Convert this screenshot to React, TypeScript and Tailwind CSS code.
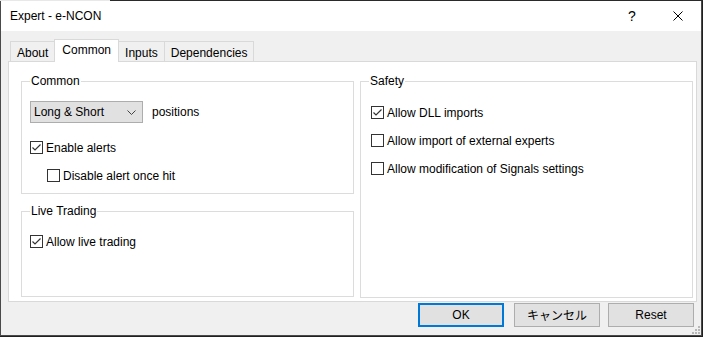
import React from "react";

const font = { fontFamily: '"Liberation Sans", Arial, sans-serif' };

function Check({ checked }: { checked?: boolean }) {
  return (
    <div className="w-[13px] h-[13px] border border-[#333333] bg-white flex items-center justify-center shrink-0">
      {checked && (
        <svg width="11" height="11" viewBox="0 0 11 11">
          <path d="M1.5 5.5 L4 8 L9.5 2.5" fill="none" stroke="#333333" strokeWidth="1.2" />
        </svg>
      )}
    </div>
  );
}

function CheckRow({ label, checked, className = "" }: { label: string; checked?: boolean; className?: string }) {
  return (
    <div className={"flex items-center gap-[3px] h-[13px] " + className}>
      <Check checked={checked} />
      <span className="text-[12px] leading-none text-black whitespace-nowrap">{label}</span>
    </div>
  );
}

function Group({ title, className = "", children }: { title: string; className?: string; children: React.ReactNode }) {
  return (
    <div className={"relative border border-[#dcdcdc] " + className}>
      <span className="absolute left-[8px] -top-[8px] bg-white px-[1px] text-[12px] leading-[14px] text-black">{title}</span>
      {children}
    </div>
  );
}

function Tab({ label, active }: { label: string; active?: boolean }) {
  return active ? (
    <div className="relative z-10 h-[23px] -mb-px bg-white border border-b-0 border-[#d9d9d9] px-[7px] flex items-start pt-[3px] text-[12px] leading-[14px] text-black">
      {label}
    </div>
  ) : (
    <div className="h-[20px] border border-b-0 border-[#d9d9d9] bg-[#f0f0f0] px-[6px] flex items-start pt-[4px] text-[12px] leading-[14px] text-black">
      {label}
    </div>
  );
}

function Btn({ label, primary, cjk, className = "" }: { label: string; primary?: boolean; cjk?: boolean; className?: string }) {
  return (
    <div
      className={
        "w-[86px] h-[24px] flex items-center justify-center bg-[#e1e1e1] text-[12px] text-black " +
        (primary ? "border-2 border-[#0078d7] " : "border border-[#adadad] ") +
        className
      }
      style={cjk ? { fontFamily: '"Noto Sans CJK JP", "Liberation Sans", sans-serif' } : undefined}
    >
      {label}
    </div>
  );
}

export default function App() {
  return (
    <div className="w-[703px] h-[337px] bg-[#202020] overflow-hidden" style={font}>
      <div className="flex h-px">
        <div className="w-[110px] bg-[#e8e8e8]" />
        <div className="flex-1 bg-[#2a2a2a]" />
      </div>
      <div className="w-[702px] h-[335px] border-l border-r border-b border-[#4a4a4a] bg-[#f0f0f0] flex flex-col">
        {/* title bar */}
        <div className="h-[30px] bg-white flex items-center pl-[9px] shrink-0">
          <span className="text-[12px] text-black">Expert - e-NCON</span>
          <div className="ml-auto flex items-center">
            <span className="text-[14px] text-black w-[46px] text-center">?</span>
            <div className="w-[46px] flex justify-center">
              <svg width="10" height="10" viewBox="0 0 10 10">
                <path d="M0.5 0.5 L9.5 9.5 M9.5 0.5 L0.5 9.5" stroke="#000" strokeWidth="1" />
              </svg>
            </div>
          </div>
        </div>

        {/* body */}
        <div className="flex flex-col pl-[7px] pr-[4px] pt-[8px]">
          <div className="flex items-end pl-[2px] h-[22px]">
            <Tab label="About" />
            <div className="-ml-px flex items-end">
              <Tab label="Common" active />
            </div>
            <div className="-ml-px flex items-end">
              <Tab label="Inputs" />
            </div>
            <div className="-ml-px flex items-end">
              <Tab label="Dependencies" />
            </div>
          </div>
          <div className="h-[241px] bg-white border border-[#d9d9d9] flex pl-[12px] pr-[3px] pt-[19px] pb-[4px] gap-[6px]">
            <div className="w-[333px] flex flex-col gap-[17px]">
              <Group title="Common" className="h-[113px] px-[8px] pt-[19px]">
                <div className="flex items-center gap-[9px]">
                  <div className="w-[113px] h-[22px] bg-[#e1e1e1] border border-[#adadad] flex items-center pl-[3px] pr-[6px]">
                    <span className="text-[12px] text-black">Long &amp; Short</span>
                    <svg className="ml-auto" width="9" height="5" viewBox="0 0 9 5">
                      <path d="M0.5 0.5 L4.5 4.5 L8.5 0.5" fill="none" stroke="#444" strokeWidth="1" />
                    </svg>
                  </div>
                  <span className="text-[12px] text-black">positions</span>
                </div>
                <CheckRow label="Enable alerts" checked className="mt-[18px]" />
                <CheckRow label="Disable alert once hit" className="mt-[15px] ml-[17px]" />
              </Group>
              <Group title="Live Trading" className="flex-1 px-[8px] pt-[23px]">
                <CheckRow label="Allow live trading" checked />
              </Group>
            </div>
            <Group title="Safety" className="w-[333px] h-[217px] px-[10px] pt-[24px] flex flex-col gap-[15px]">
              <CheckRow label="Allow DLL imports" checked />
              <CheckRow label="Allow import of external experts" />
              <CheckRow label="Allow modification of Signals settings" />
            </Group>
          </div>
          <div className="flex justify-end gap-[8px] mt-[1px] pr-[3px]">
            <Btn label="OK" primary className="mr-[2px]" />
            <Btn label="キャンセル" cjk />
            <Btn label="Reset" />
          </div>
        </div>
        <div className="relative flex-1">
          <svg className="absolute right-[1px] bottom-[1px]" width="8" height="8" viewBox="0 0 8 8">
            <rect x="6" y="0" width="2" height="2" fill="#b8b8b8" />
            <rect x="3" y="3" width="2" height="2" fill="#b8b8b8" />
            <rect x="6" y="3" width="2" height="2" fill="#b8b8b8" />
            <rect x="0" y="6" width="2" height="2" fill="#b8b8b8" />
            <rect x="3" y="6" width="2" height="2" fill="#b8b8b8" />
            <rect x="6" y="6" width="2" height="2" fill="#b8b8b8" />
          </svg>
        </div>
      </div>
    </div>
  );
}
